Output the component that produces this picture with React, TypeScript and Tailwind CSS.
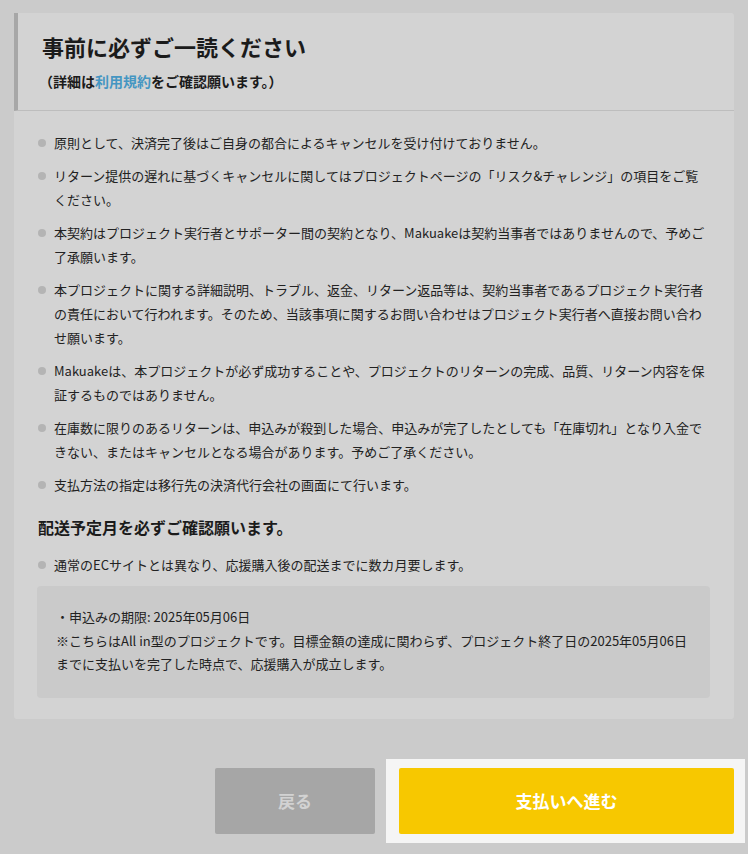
import React from "react";

const items: React.ReactNode[] = [
  "原則として、決済完了後はご自身の都合によるキャンセルを受け付けておりません。",
  "リターン提供の遅れに基づくキャンセルに関してはプロジェクトページの「リスク&チャレンジ」の項目をご覧ください。",
  "本契約はプロジェクト実行者とサポーター間の契約となり、Makuakeは契約当事者ではありませんので、予めご了承願います。",
  "本プロジェクトに関する詳細説明、トラブル、返金、リターン返品等は、契約当事者であるプロジェクト実行者の責任において行われます。そのため、当該事項に関するお問い合わせはプロジェクト実行者へ直接お問い合わせ願います。",
  "Makuakeは、本プロジェクトが必ず成功することや、プロジェクトのリターンの完成、品質、リターン内容を保証するものではありません。",
  "在庫数に限りのあるリターンは、申込みが殺到した場合、申込みが完了したとしても「在庫切れ」となり入金できない、またはキャンセルとなる場合があります。予めご了承ください。",
  "支払方法の指定は移行先の決済代行会社の画面にて行います。",
];

function Bullet({ children }: { children: React.ReactNode }) {
  return (
    <li className="flex mb-[9px] last:mb-0">
      <span className="w-4 shrink-0 flex pt-[8px]">
        <span className="block w-[8px] h-[8px] rounded-full bg-[#b4b4b4]" />
      </span>
      <span className="flex-1">{children}</span>
    </li>
  );
}

export default function App() {
  return (
    <div
      className="min-h-[854px] w-[748px] bg-[#cbcbcb] text-[#222222] pt-[13px] px-[14px]"
      style={{ fontFamily: '"Noto Sans CJK JP", "Noto Sans", sans-serif' }}
    >
      <div className="bg-[#d3d3d3] rounded-[3px]">
        <div className="border-l-4 border-[#a7a7a7] border-b border-b-[#bdbdbd] pl-6 pt-[18px] pb-[19px]">
          <h1 className="text-[22px] font-bold leading-[30px] text-[#1b1b1b]">
            事前に必ずご一読ください
          </h1>
          <p className="text-[14px] font-bold leading-[20px] mt-[10px] -ml-[3px] text-[#1b1b1b]">
            （詳細は<span className="text-[#4596c2]">利用規約</span>をご確認願います。）
          </p>
        </div>
        <div className="px-6 pt-[20px] pb-[21px] text-[13px] leading-[24px]">
          <ul>
            {items.map((t, i) => (
              <Bullet key={i}>{t}</Bullet>
            ))}
          </ul>
          <h2 className="text-[16px] font-bold leading-[24px] mt-[18px] mb-[14px] text-[#1b1b1b]">
            配送予定月を必ずご確認願います。
          </h2>
          <ul>
            <Bullet>通常のECサイトとは異なり、応援購入後の配送までに数カ月要します。</Bullet>
          </ul>
          <div className="mt-[9px] -ml-px bg-[#cacaca] rounded-[4px] pl-[19px] pr-[12px] pt-[19px] pb-[22px] leading-[23.5px]">
            <p className="whitespace-nowrap">・申込みの期限: 2025年05月06日</p>
            <p className="whitespace-nowrap">
              ※こちらはAll in型のプロジェクトです。目標金額の達成に関わらず、プロジェクト終了日の2025年05月06日
            </p>
            <p className="whitespace-nowrap">までに支払いを完了した時点で、応援購入が成立します。</p>
          </div>
        </div>
      </div>
      <div className="flex justify-end gap-6 mt-[49px]">
        <button className="w-[160px] h-[66px] rounded-[2px] bg-[#a6a6a6] text-[#d2d2d2] text-[17px] font-bold">
          戻る
        </button>
        <div className="relative">
          <div className="absolute -left-[13px] -right-[11px] -top-[9px] -bottom-[9px] bg-[#f5f5f5]" />
          <button className="relative w-[335px] h-[66px] rounded-[2px] bg-[#f7c800] text-white text-[17px] font-bold">
            支払いへ進む
          </button>
        </div>
      </div>
    </div>
  );
}
